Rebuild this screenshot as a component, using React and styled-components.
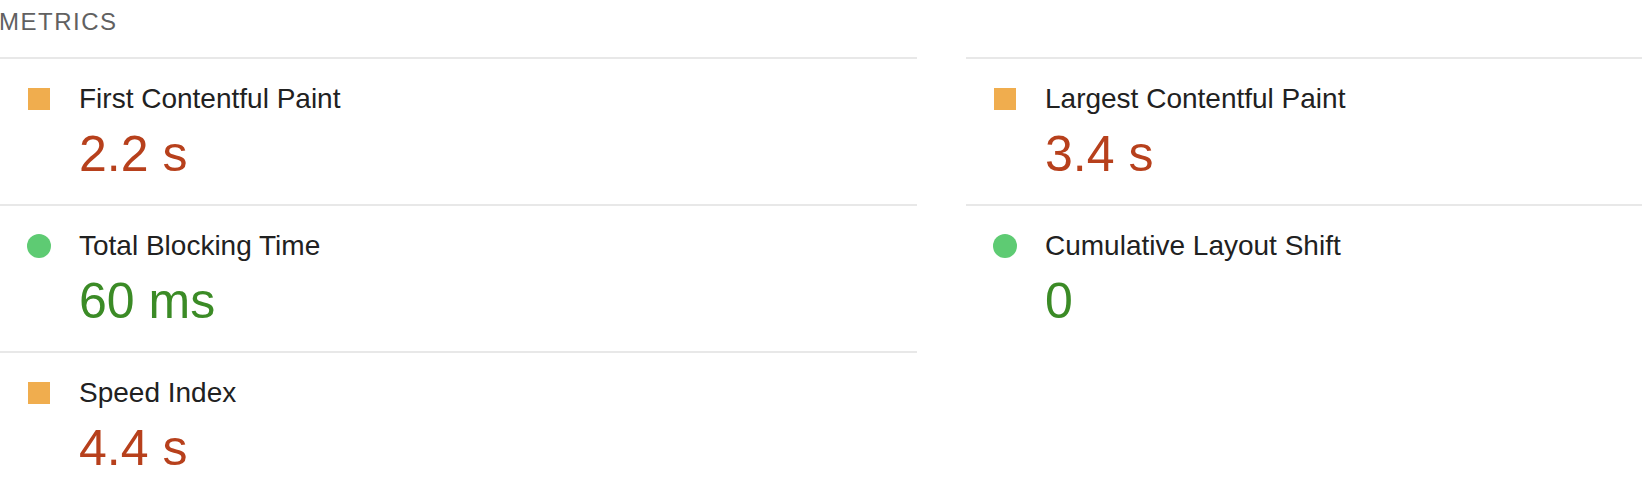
import React from "react";
import styled, { createGlobalStyle, css } from "styled-components";

const GlobalStyle = createGlobalStyle`
  html, body {
    margin: 0;
    padding: 0;
    background: #ffffff;
  }
  body {
    font-family: "Liberation Sans", Arial, Helvetica, sans-serif;
    overflow: hidden;
  }
`;

const Section = styled.section`
  width: 1642px;
  display: flex;
  flex-direction: column;
`;

const Header = styled.div`
  padding-top: 6px;
  margin-bottom: 19px;
  margin-left: -1px;
  font-size: 24px;
  line-height: 32px;
  letter-spacing: 1.5px;
  text-transform: uppercase;
  color: #616161;
`;

const Grid = styled.div`
  display: grid;
  grid-template-columns: 917px 1fr;
  column-gap: 49px;
`;

const Metric = styled.div`
  border-top: 2px solid #e8e8e8;
  padding: 20px 0 22px 27px;
  display: grid;
  grid-template-columns: 24px 1fr;
  column-gap: 28px;
  align-items: start;
`;

const IconCell = styled.div`
  height: 40px;
  display: flex;
  align-items: center;
`;

const Icon = styled.span`
  display: block;
  ${({ $kind }) =>
    $kind === "pass"
      ? css`
          width: 24px;
          height: 24px;
          border-radius: 50%;
          background: #5ecb73;
        `
      : css`
          width: 22px;
          height: 22px;
          margin: 1px;
          background: #f0ad4e;
        `}
`;

const Body = styled.div`
  display: flex;
  flex-direction: column;
`;

const Title = styled.div`
  font-size: 28px;
  line-height: 40px;
  color: #212121;
`;

const Value = styled.div`
  margin-top: 7px;
  font-size: 50px;
  line-height: 56px;
  color: ${({ $kind }) => ($kind === "pass" ? "#3b8b26" : "#b7401c")};
`;

const metrics = [
  { title: "First Contentful Paint", value: "2.2 s", kind: "average" },
  { title: "Largest Contentful Paint", value: "3.4 s", kind: "average" },
  { title: "Total Blocking Time", value: "60 ms", kind: "pass" },
  { title: "Cumulative Layout Shift", value: "0", kind: "pass" },
  { title: "Speed Index", value: "4.4 s", kind: "average" },
];

export default function App() {
  return (
    <>
      <GlobalStyle />
      <Section>
        <Header>Metrics</Header>
        <Grid>
          {metrics.map((m) => (
            <Metric key={m.title}>
              <IconCell>
                <Icon $kind={m.kind} />
              </IconCell>
              <Body>
                <Title>{m.title}</Title>
                <Value $kind={m.kind}>{m.value}</Value>
              </Body>
            </Metric>
          ))}
        </Grid>
      </Section>
    </>
  );
}
